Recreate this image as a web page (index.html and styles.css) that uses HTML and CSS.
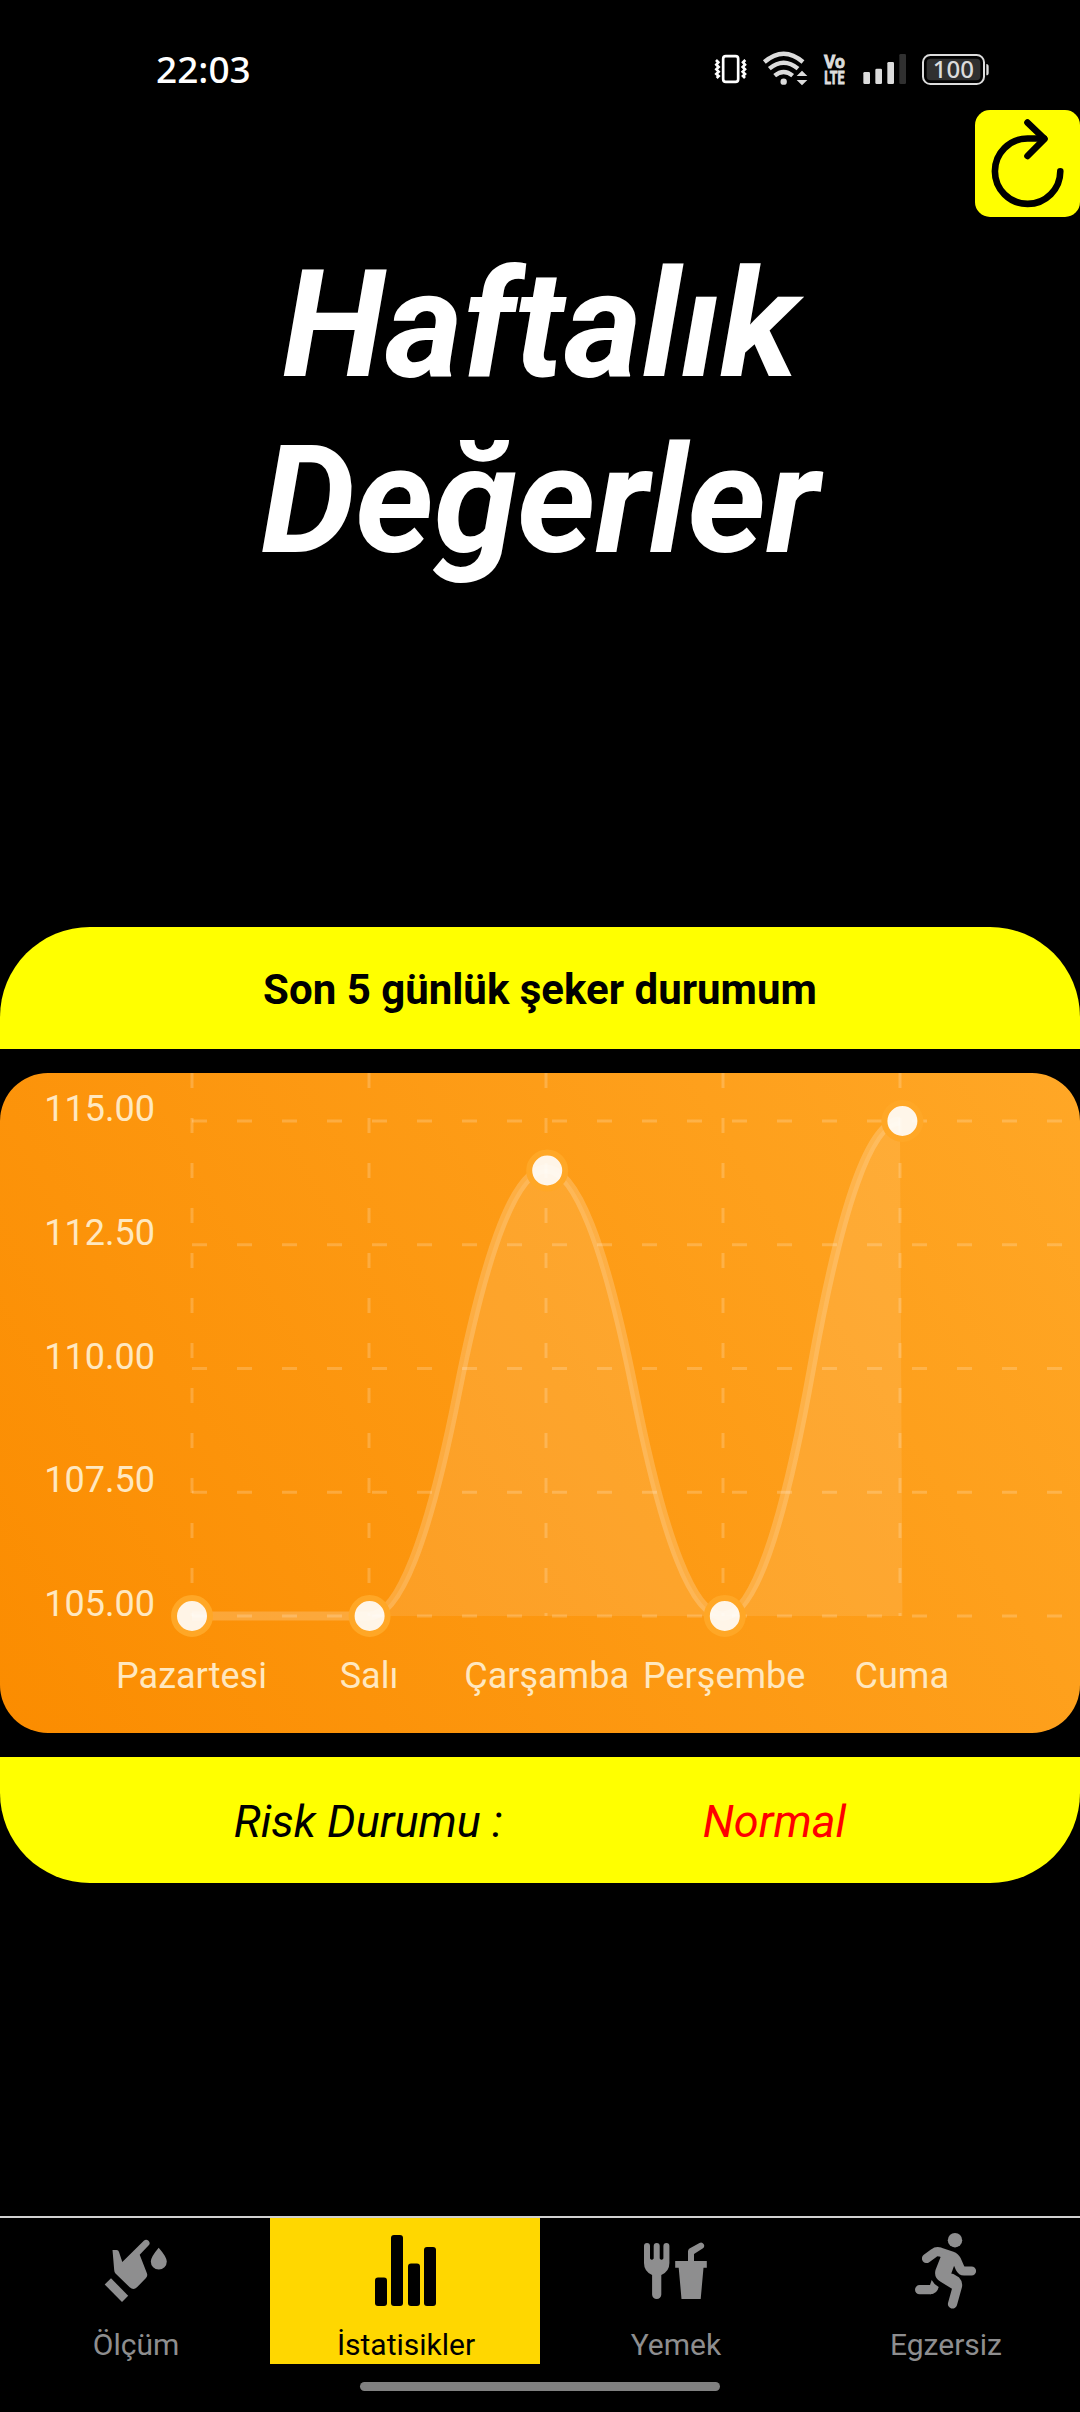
FILE: index.html
```html
<!DOCTYPE html>
<html lang="tr">
<head>
<meta charset="utf-8">
<title>Haftalık Değerler</title>
<link rel="stylesheet" href="styles.css">
</head>
<body>
<div class="screen">
  <header class="status">
    <span class="clock">22:03</span>
    <div class="status-icons">
      <svg class="vibrate" viewBox="72 60 99 108" width="33" height="36" fill="none" stroke="#fff">
        <rect x="99.500" y="78.500" width="45" height="77" rx="8" stroke-width="8"/>
        <path stroke-width="8" d="M78 90l7 7-6 7 7 7-7 7 7 7-7 7 7 6-6 6M166 90l-7 7 6 7-7 7 7 7-7 7 7 7-6 6 6 6"/>
      </svg>
      <svg class="wifi" viewBox="216 60 138 108" width="46" height="36" fill="none" stroke="#dcdcdc">
        <path stroke-width="13" d="M223 96Q281 46 339 96M238 116Q281 80 324 116M254 137Q281 115 308 137"/>
        <circle cx="281" cy="155" r="9.500" fill="#dcdcdc" stroke="none"/>
        <path fill="#dcdcdc" stroke="none" d="M320 138l16-16 16 16zM320 150h32l-16 16z"/>
      </svg>
      <svg class="volte" viewBox="399 60 72 108" width="24" height="36" fill="#dcdcdc">
        <text transform="translate(402 113) scale(.92 1)">Vo</text>
        <text transform="translate(403 161) scale(.66 1)">LTE</text>
      </svg>
      <svg class="signal" viewBox="516 60 135 108" width="45" height="36" fill="#dcdcdc">
        <rect x="520" y="126" width="20" height="36" rx="4"/>
        <rect x="556" y="116" width="20" height="46" rx="4"/>
        <rect x="592" y="96" width="20" height="66" rx="4"/>
        <rect x="628" y="72" width="20" height="90" rx="4" fill="#303030"/>
      </svg>
      <svg class="battery" viewBox="693 60 207 108" width="69" height="36">
        <rect x="699" y="75" width="183" height="87" rx="22" fill="none" stroke="#dcdcdc" stroke-width="6"/>
        <rect x="710" y="86" width="161" height="65" rx="12" fill="#303030"/>
        <path d="M889 102q7 0 7 8v18q0 8-7 8z" fill="#dcdcdc"/>
        <text x="790" y="145" text-anchor="middle">100</text>
      </svg>
    </div>
  </header>

  <button class="refresh" aria-label="Yenile">
    <svg viewBox="0 0 105 107" width="105" height="107" fill="none" stroke="#000" stroke-width="6.600" stroke-linecap="round">
      <path d="M85.300 61.200A32.700 32.700 0 1 1 52.600 28.500H69"/>
      <path d="M52.500 12.600L69.500 28.900L52.500 46" stroke-linejoin="round"/>
    </svg>
  </button>

  <h1 class="title">Haftalık<br>Değerler</h1>

  <main class="panel">
    <div class="panel-head">Son 5 günlük şeker durumum</div>
    <svg class="chart" viewBox="0 0 1080 660" width="1080" height="660">
      <defs>
        <linearGradient id="bg" gradientUnits="userSpaceOnUse" x1="0" y1="660" x2="1080" y2="0">
          <stop offset="0" stop-color="#fb8c00"/>
          <stop offset="1" stop-color="#ffa726"/>
        </linearGradient>
      </defs>
      <rect width="1080" height="660" rx="48" fill="url(#bg)"/>
      <path class="grid" d="M192 48H1080M192 171.750H1080M192 295.500H1080M192 419.250H1080M192 543H1080"/>
      <path class="grid" d="M192 0V543M369 0V543M546 0V543M723 0V543M900 0V543"/>
      <path class="curve" d="M192 543Q236.250 543 280.500 543Q324.750 543 369 543Q413.250 543 457.500 319.500Q501.750 96 546 96Q590.250 96 634.500 319.500Q678.750 543 723 543Q767.250 543 811.500 295.500Q855.750 48 900 48"/>
      <path class="area" d="M192 543H369Q413.250 543 457.500 319.500Q501.750 96 546 96Q590.250 96 634.500 319.500Q678.750 543 723 543Q767.250 543 811.500 295.500Q855.750 48 900 48L902.400 543H192Z"/>
      <g class="dots">
        <circle cx="192" cy="543" r="18"/>
        <circle cx="369.600" cy="543" r="18"/>
        <circle cx="547.200" cy="97.500" r="18"/>
        <circle cx="724.800" cy="543" r="18"/>
        <circle cx="902.400" cy="48" r="18"/>
      </g>
      <g class="labels y">
        <text x="155" y="48">115.00</text>
        <text x="155" y="171.750">112.50</text>
        <text x="155" y="295.500">110.00</text>
        <text x="155" y="419.250">107.50</text>
        <text x="155" y="543">105.00</text>
      </g>
      <g class="labels x">
        <text x="191.500" y="615">Pazartesi</text>
        <text x="369" y="615">Salı</text>
        <text x="546.600" y="615">Çarşamba</text>
        <text x="724.200" y="615">Perşembe</text>
        <text x="901.800" y="615">Cuma</text>
      </g>
    </svg>
    <div class="panel-foot">
      <span>Risk Durumu :</span>
      <span class="risk">Normal</span>
    </div>
  </main>

  <nav class="tabs">
    <a class="tab">
      <svg viewBox="0 0 90 90" width="90" height="90" fill="currentColor">
        <path d="M22.500 25H26.500Q28.500 25 29 27L32.300 37 53.800 15.800A3.300 3.300 0 0 1 58.500 20.500L49.700 29.700 57 48.500Q57.800 51 56 53L47 62.300Q43.500 65.500 39.700 62.300L25.500 48.500Q24.300 47 24.200 45z"/>
        <path d="M21 53.300L38.200 70.700 32 77 14.700 59.500z"/>
        <path d="M68.700 22.700Q76.800 32 76.800 36.500a8 8 0 0 1-16 0Q60.800 32 68.700 22.700z"/>
      </svg>
      <span>Ölçüm</span>
    </a>
    <a class="tab active">
      <svg viewBox="0 0 90 90" width="90" height="90" fill="currentColor">
        <rect x="15" y="52.500" width="12" height="28.500" rx="3"/>
        <rect x="31" y="10" width="12" height="71" rx="3"/>
        <rect x="48" y="38.500" width="12" height="42.500" rx="3"/>
        <rect x="64" y="22" width="12" height="59" rx="3"/>
      </svg>
      <span>İstatisikler</span>
    </a>
    <a class="tab">
      <svg viewBox="0 0 90 90" width="90" height="90" fill="currentColor">
        <path d="M14 21a3 3 0 0 1 6 0V33.500q1.800 2.500 3.700 0V21a3 3 0 0 1 6 0V33.500q1.800 2.500 3.700 0V21a3 3 0 0 1 6 0V38q0 8.500-8.100 12V69.500a4.600 4.600 0 0 1-9.200 0V50Q14 46.500 14 38z"/>
        <path d="M45.200 36H58V26.500Q58 24.500 59.500 23.500L69.500 18a3.200 3.200 0 0 1 3.500 5.300L64 29V36H76.800V42.700H73.500L70.700 74H51.500L48.700 42.700H45.200z"/>
      </svg>
      <span>Yemek</span>
    </a>
    <a class="tab">
      <svg viewBox="0 0 90 90" width="90" height="90" fill="currentColor">
        <circle cx="55" cy="15.200" r="7.200"/>
        <g fill="none" stroke="currentColor" stroke-width="9.200" stroke-linecap="round" stroke-linejoin="round">
          <path d="M26.500 33.500L34 28Q36.500 26 40 27L52 31Q55 32 56.500 35L60 43Q61.500 46 64 46H71.500"/>
          <path d="M51 53L56 56Q58 58 57.500 61L52.500 79"/>
          <path d="M19.600 64.700H30"/>
        </g>
        <path d="M42 28L58 33 54 41 50 52 60 59 54 65 41 57Q33.500 53 35.500 45L41 31z"/>
        <path d="M31.700 55Q34 59.500 38.700 62Q37 69.300 30 69.300V60z"/>
      </svg>
      <span>Egzersiz</span>
    </a>
  </nav>
  <div class="home-bar"></div>
</div>
</body>
</html>
```
FILE: styles.css
```css
* { box-sizing: border-box; }
body { margin: 0; background: #000; font-family: Roboto, "Liberation Sans", sans-serif; }
.screen { width: 1080px; height: 2412px; display: flex; flex-direction: column; background: #000; overflow: hidden; }

.status { height: 110px; flex: none; padding: 50px 90px 0 156px; display: flex; justify-content: space-between; align-items: flex-start; color: #fff; }
.clock { font: 500 37px/37px "Noto Sans", sans-serif; }
.status-icons { display: flex; }
.status-icons svg { display: block; overflow: visible; }
.wifi { margin-left: 15px; }
.volte { margin-left: 15px; }
.signal { margin-left: 15px; }
.battery { margin-left: 14px; }
.volte text { font: 700 57px Roboto, sans-serif; stroke: #dcdcdc; stroke-width: 2.5px; }
.battery text { font: 500 72px "Noto Sans", sans-serif; fill: #dcdcdc; }

.refresh { align-self: flex-end; width: 105px; height: 107px; flex: none; padding: 0; border: 0; border-radius: 15px; background: #ff0; }
.refresh svg { display: block; }

.title { margin: 20px 0 0; height: 352px; color: #fff; font-size: 150px; line-height: 176px; font-weight: 700; font-style: italic; text-align: center; }

.panel { margin-top: 338px; display: flex; flex-direction: column; gap: 24px; }
.panel-head { height: 122px; border-radius: 90px 90px 0 0; background: #ff0; color: #000; font-size: 42px; font-weight: 700; line-height: 126px; text-align: center; }
.panel-foot { height: 126px; border-radius: 0 0 90px 90px; background: #ff0; color: #000; display: flex; justify-content: center; gap: 200px; font-size: 45px; font-style: italic; line-height: 130px; }
.risk { color: #f00; }

.chart { display: block; }
.grid { fill: none; stroke: rgba(255, 255, 255, .2); stroke-width: 3; stroke-dasharray: 15 30; }
.curve { fill: none; stroke: rgba(255, 255, 255, .2); stroke-width: 9; }
.area { fill: rgba(255, 255, 255, .1); }
.dots circle { fill: rgba(255, 255, 255, .9); stroke: #ffa726; stroke-width: 6; }
.labels { font-size: 36px; fill: #ffe8c0; }
.labels.y { text-anchor: end; }
.labels.x { text-anchor: middle; }

.tabs { margin-top: 333px; height: 148px; flex: none; display: grid; grid-template-columns: repeat(4, 1fr); border-top: 2px solid #d0d0d0; }
.tab { display: flex; flex-direction: column; align-items: center; padding-top: 7px; color: #8e8e8f; font-size: 30px; line-height: 36px; }
.tab svg { display: block; margin-bottom: 12px; }
.tab span { padding-left: 2px; }
.tab.active { background: #ffd700; color: #000; }
.home-bar { width: 360px; height: 9px; margin: 18px auto 0; border-radius: 5px; background: #808080; }
```
